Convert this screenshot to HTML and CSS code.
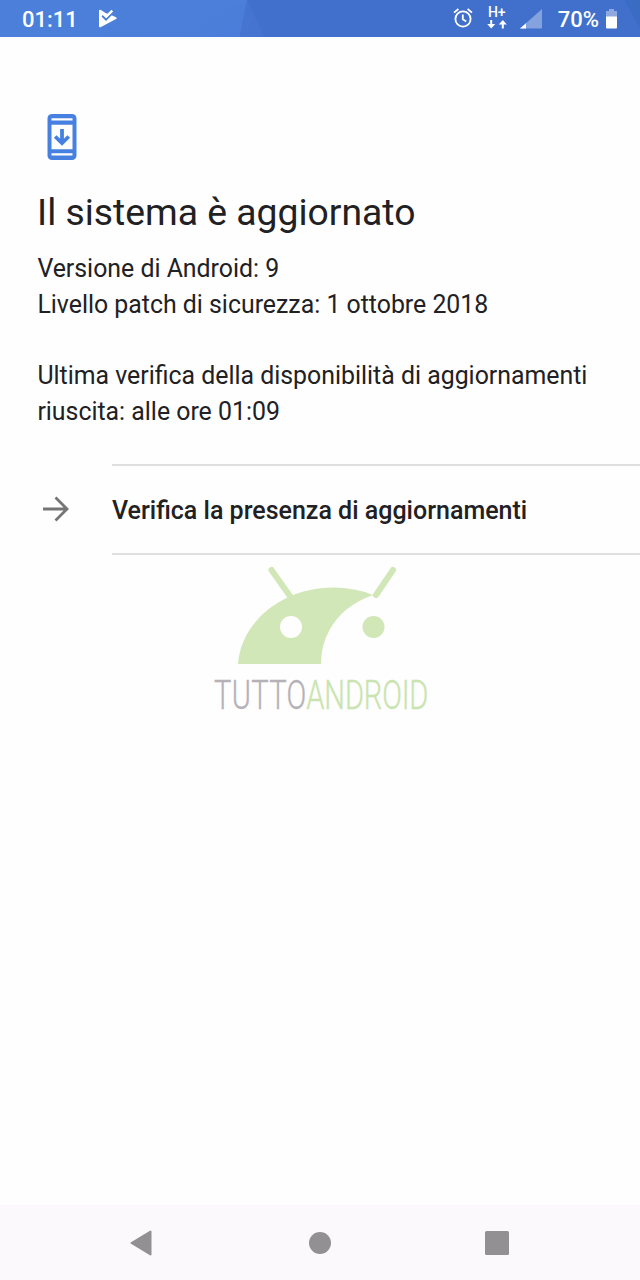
FILE: index.html
```
<!DOCTYPE html>
<html lang="it">
<head>
  <meta charset="utf-8">
  <title>Aggiornamento di sistema</title>
  <link rel="stylesheet" href="styles.css">
</head>
<body>
  <header class="status-bar">
    <div class="status-left">
      <span class="clock">01:11</span>
      <svg class="icon-play" width="18" height="20" viewBox="0 0 18 20">
        <path d="M0 2Q0 0 2 1L6.5 4L12 6L17 8.2Q18.5 9 17 10L2 18Q0 19 0 17Z" fill="#fff"/>
        <path d="M3.2 6.8L7 10.5L15 2.5" fill="none" stroke="#4b7fd9" stroke-width="2"/>
        <path d="M4 4.5L7.3 7.6L13.3 1.6" fill="none" stroke="#fff" stroke-width="2.3"/>
      </svg>
    </div>
    <div class="status-right">
      <svg class="icon-alarm" width="20" height="20" viewBox="0 0 20 20" fill="none" stroke="#fff" stroke-width="1.8">
        <circle cx="10" cy="11" r="7.600"/>
        <path d="M1 4.6L5.4 1M19 4.6L14.6 1M9.800 6.500V11.300L13.200 13.400"/>
      </svg>
      <div class="network">
        <span class="network-type">H+</span>
        <svg width="20" height="9" viewBox="0 0 20 9" fill="#fff">
          <path d="M3.2 0H5.2V4H8.2L4.2 8.5L0.2 4H3.2ZM14.8 8.5H16.8V4.5H19.8L15.8 0L11.8 4.5H14.8Z"/>
        </svg>
      </div>
      <svg class="icon-signal" width="22" height="20" viewBox="0 0 22 20">
        <path d="M22 0V19.500H0Z" fill="#fff" opacity=".35"/>
        <path d="M6 14.300V19.500H0Z" fill="#fff"/>
      </svg>
      <span class="battery-level">70%</span>
      <svg class="icon-battery" width="11" height="20" viewBox="0 0 11 20" fill="#fff">
        <path d="M3 0H8V2H11V8H0V2H3Z" opacity=".4"/>
        <path d="M0 7.500H11V18.500Q11 19.500 10 19.500H1Q0 19.500 0 18.500Z"/>
      </svg>
    </div>
  </header>

  <main class="content">
    <svg class="icon-update" width="30" height="46" viewBox="0 0 30 46">
      <rect x=".5" width="29" height="46" rx="4.500" fill="#4681e1"/>
      <path d="M4.500 4.300H25.500V6.500H4.500ZM4.500 10.700H25.500V35.300H4.500ZM4.500 39.300H25.500V41.500H4.500Z" fill="#fefefe"/>
      <path d="M15 15V29M8.200 22.500L15 29.200L21.800 22.500" fill="none" stroke="#4681e1" stroke-width="3.800"/>
    </svg>
    <h1>Il sistema è aggiornato</h1>
    <p>Versione di Android: 9<br>Livello patch di sicurezza: 1 ottobre 2018</p>
    <p>Ultima verifica della disponibilità di aggiornamenti<br>riuscita: alle ore 01:09</p>

    <div class="action">
      <svg width="26" height="26" viewBox="0 0 26 26" fill="none" stroke="#757575" stroke-width="2.800">
        <path d="M0 13H24M12.500 1.500L24 13L12.500 24.500"/>
      </svg>
      <button class="check-button">Verifica la presenza di aggiornamenti</button>
    </div>

    <svg class="watermark" width="224" height="164" viewBox="0 0 224 164">
      <g fill="#d1e7b8">
        <path d="M24 99C27 58 67 22 121 22.500Q143 23 159 30Q128 41 115 66Q107 80 107 99Z"/>
        <path d="M158 30L164 28L167 29.500Q163 31 159 31Z"/>
        <circle cx="159.500" cy="62" r="11"/>
      </g>
      <circle cx="77" cy="62" r="11" fill="#fefefe"/>
      <path d="M57.500 5L78 34M179 5L162 30" stroke="#d1e7b8" stroke-width="6" stroke-linecap="round"/>
      <g class="brand" transform="scale(.71 1)">
        <text class="brand-tutto" x="0" y="144" textLength="130">TUTTO</text>
        <text class="brand-android" x="130" y="144" textLength="172">ANDROID</text>
      </g>
    </svg>
  </main>

  <nav class="nav-bar">
    <svg width="22" height="26" viewBox="0 0 22 26"><path d="M20.500 1.500V24.500L1.500 13Z" fill="#929093" stroke="#929093" stroke-width="2" stroke-linejoin="round"/></svg>
    <svg width="22" height="22" viewBox="0 0 22 22"><circle cx="11" cy="11" r="11" fill="#929093"/></svg>
    <svg width="24" height="24" viewBox="0 0 24 24"><rect width="24" height="24" rx="1.500" fill="#929093"/></svg>
  </nav>
</body>
</html>
```
FILE: styles.css
```
body {
  margin: 0;
  height: 1280px;
  display: flex;
  flex-direction: column;
  font-family: Roboto, sans-serif;
  background-color: #fefefe;
  color: #212124;
}
.status-bar {
  height: 37px;
  box-sizing: border-box;
  padding: 0 23px 0 22px;
  display: flex;
  justify-content: space-between;
  color: white;
  font-size: 22px;
  font-weight: 500;
  line-height: 39px;
  background: linear-gradient(62deg, transparent 80%, #3a6cc3 81%) right / 60px 37px no-repeat,
    conic-gradient(at 247px 0, #4170cc 154deg, #4474cf 155deg, #4575d0 191deg, #4a7dd9 192deg, #4c82dc);
}
.status-left, .status-right {
  display: flex;
  align-items: flex-start;
}
.icon-play {
  margin: 9px 0 0 21px;
}
.icon-alarm {
  margin-top: 8px;
}
.network {
  width: 20px;
  margin: 7px 13px 0 14px;
  display: flex;
  flex-direction: column;
  align-items: center;
}
.network-type {
  height: 13px;
  font-size: 14px;
  line-height: 11px;
}
.icon-signal {
  margin-top: 9px;
}
.battery-level {
  margin: 0 7px 0 16px;
}
.icon-battery {
  margin-top: 9px;
}
.content {
  flex: 1;
  padding: 77px 0 0 37px;
}
.icon-update {
  display: block;
  margin-left: 10px;
}
h1 {
  margin: 30px 0 17px;
  font-size: 37.3px;
  font-weight: 400;
  line-height: 44px;
}
p {
  margin: 0 0 36px;
  padding-left: 0.4px;
  font-size: 24.86px;
  line-height: 35.6px;
}
p + p {
  margin-bottom: 34.6px;
}
.action {
  display: flex;
  align-items: center;
  margin-left: 6px;
}
.check-button {
  flex: 1;
  height: 91px;
  margin-left: 43px;
  padding: 2px 0 0;
  border: 0;
  border-top: 2px solid #dfdfe0;
  border-bottom: 2px solid #dfdfe0;
  background: none;
  color: inherit;
  font: 500 25px Roboto, sans-serif;
  text-align: left;
}
.watermark {
  display: block;
  margin: 10px 0 0 177px;
}
.brand {
  font-size: 41px;
  font-weight: 300;
  stroke-width: 0.4px;
}
.brand-tutto {
  fill: #b5b1b7;
  stroke: #b5b1b7;
}
.brand-android {
  fill: #cae4b0;
  stroke: #cae4b0;
}
.nav-bar {
  height: 75px;
  box-sizing: border-box;
  padding: 0 131px 0 130px;
  display: flex;
  align-items: center;
  justify-content: space-between;
  background-color: #fbf9fc;
}
.nav-bar svg:nth-child(2) {
  margin-left: 2px;
}
```
